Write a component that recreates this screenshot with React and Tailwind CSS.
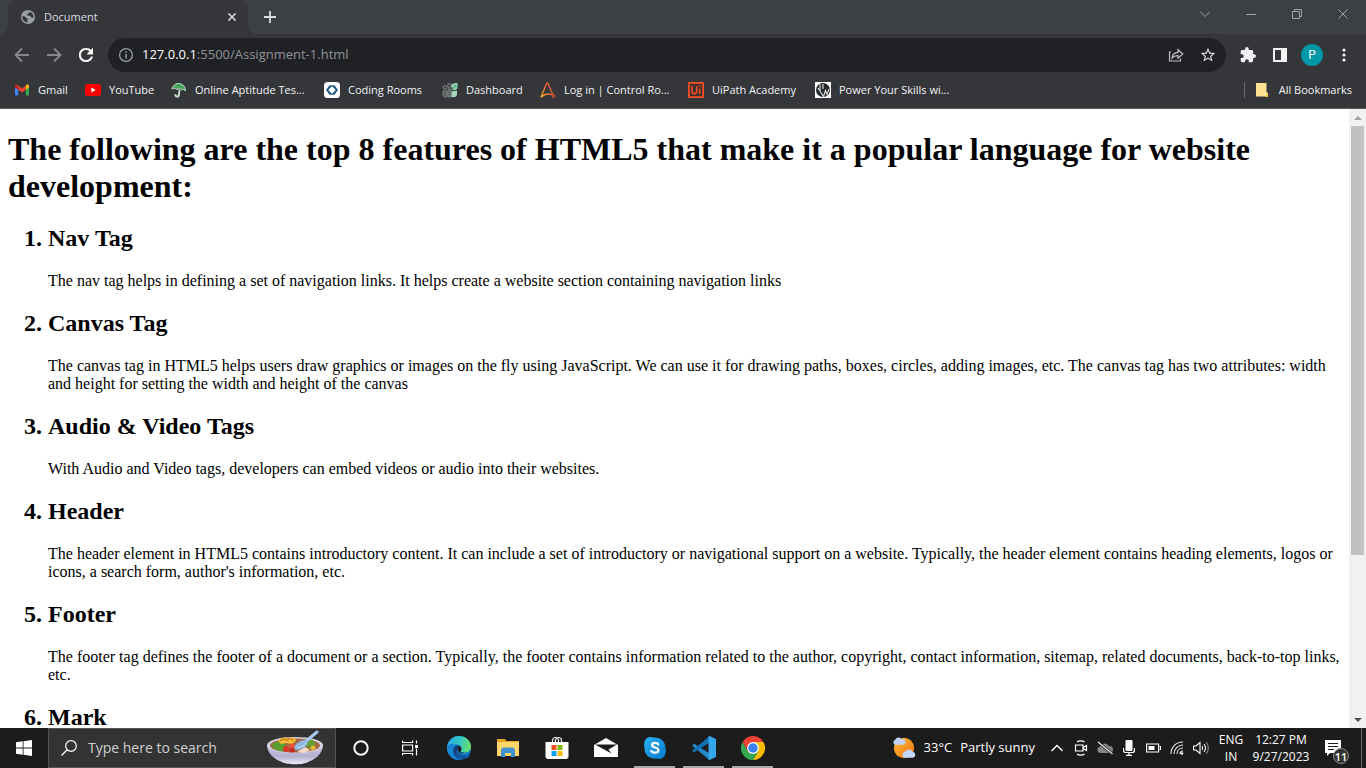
import React from 'react';

const ui = "font-['Open_Sans','Noto_Sans',sans-serif]";

/* ---------- browser icons ---------- */

function Globe() {
  return (
    <svg viewBox="0 0 14 14" className="size-3.5 shrink-0" aria-hidden="true">
      <circle cx="7" cy="7" r="7" fill="#9aa0a6" />
      <path d="M1.3 6.2c1.6-.2 3 .2 3.600 1.300.5.9 1.700.5 1.800 1.600.1 1-.4 1.800-.4 3.300C3.500 12.200 1 9.500 1.300 6.200zM6 1.500h3.200c.2 1-.9 1.400-1.600 1.600C6.600 3.400 7.300 4.300 6.300 4.700c-.6.3.2 1.100 1 1 1.200-.2 2.400.3 2.700 1.300.2.900 1.200.8 2.500.5C12.600 4.500 10.600 1.600 7.500 1.200z" fill="#35363a" />
    </svg>
  );
}

function Cross({ className }) {
  return (
    <svg viewBox="0 0 12 12" className={className} aria-hidden="true">
      <path d="M.5.5l11 11M11.500.500l-11 11" stroke="currentColor" fill="none" vectorEffect="non-scaling-stroke" />
    </svg>
  );
}

function Arrow({ flip }) {
  return (
    <svg viewBox="0 0 16 16" className={flip ? 'size-4 rotate-180' : 'size-4'} aria-hidden="true">
      <path d="M15 8H2M8 1.500L1.500 8 8 14.500" fill="none" stroke="#85878b" strokeWidth="1.900" />
    </svg>
  );
}

function Reload() {
  return (
    <svg viewBox="4 4 16 16" className="size-3.5" aria-hidden="true">
      <path fill="#fff" stroke="#fff" strokeWidth=".4" d="M17.650 6.350C16.200 4.900 14.210 4 12 4c-4.420 0-7.990 3.580-7.990 8s3.570 8 7.990 8c3.730 0 6.840-2.550 7.730-6h-2.080c-.820 2.330-3.040 4-5.650 4-3.310 0-6-2.690-6-6s2.690-6 6-6c1.660 0 3.140.690 4.220 1.780L13 11h7V4l-2.350 2.350z" />
    </svg>
  );
}

function Info() {
  return (
    <svg viewBox="0 0 16 16" className="size-4 shrink-0" aria-hidden="true">
      <circle cx="8" cy="8" r="6.400" fill="none" stroke="#9aa0a6" strokeWidth="1.300" />
      <path d="M8 7v4.500M8 4.200v1.600" stroke="#9aa0a6" strokeWidth="1.500" />
    </svg>
  );
}

function Share() {
  return (
    <svg viewBox="0 0 16 16" className="size-4" aria-hidden="true">
      <path d="M3 5H1.500v9h11v-2.500M4 11c.4-3.500 2.400-5.400 6-5.600V2.700L14.800 7 10 11.200V8.600C7.500 8.500 5.500 9.300 4 11z" fill="none" stroke="#bdc1c6" strokeWidth="1.200" />
    </svg>
  );
}

function Star() {
  return (
    <svg viewBox="1 1 22 22" className="size-4" aria-hidden="true">
      <path fill="#dadce0" d="M22 9.240l-7.190-.620L12 2 9.190 8.630 2 9.240l5.460 4.730L5.820 21 12 17.270 18.180 21l-1.630-7.030L22 9.240zM12 15.400l-3.760 2.270 1-4.280-3.320-2.880 4.380-.380L12 6.100l1.710 4.040 4.380.380-3.320 2.880 1 4.280L12 15.400z" />
    </svg>
  );
}

function Puzzle() {
  return (
    <svg viewBox="1 1 22 22" className="size-4" aria-hidden="true">
      <path fill="#f1f3f4" d="M20.500 11H19V7c0-1.100-.9-2-2-2h-4V3.500a2.500 2.500 0 0 0-5 0V5H4c-1.100 0-2 .9-2 2v3.800h1.500a2.700 2.700 0 0 1 0 5.400H2V20c0 1.100.9 2 2 2h3.800v-1.500a2.700 2.700 0 0 1 5.400 0V22H17c1.100 0 2-.9 2-2v-4h1.500a2.500 2.500 0 0 0 0-5z" />
    </svg>
  );
}

function SidePanel() {
  return (
    <svg viewBox="0 0 14 14" className="size-3.5" aria-hidden="true">
      <path fill="#f1f3f4" fillRule="evenodd" d="M0 0h14v14H0zM2 2v10h6V2z" />
    </svg>
  );
}

/* ---------- bookmark icons ---------- */

const marks = {
  gmail: (
    <svg viewBox="0 0 16 16" className="size-4 shrink-0">
      <path d="M1 4.500v8.200c0 .5.3.8.8.8h2.400V7z" fill="#4285f4" />
      <path d="M15 4.500v8.200c0 .5-.3.8-.8.8h-2.400V7z" fill="#34a853" />
      <path d="M4.200 3.600v4.200L8 10.600l3.800-2.800V3.600L8 6.500z" fill="#ea4335" />
      <path d="M11.800 3.400v4.400L15 5.400V4.200c0-1.500-1.500-2-2.500-1.300z" fill="#fbbc04" />
      <path d="M4.200 3.400v4.400L1 5.400V4.200c0-1.500 1.500-2 2.500-1.300z" fill="#c5221f" />
    </svg>
  ),
  youtube: (
    <svg viewBox="0 0 16 16" className="size-4 shrink-0">
      <rect x="0" y="2" width="16" height="12" rx="3" fill="#f00" />
      <path d="M6.300 5.500v5L10.700 8z" fill="#fff" />
    </svg>
  ),
  umbrella: (
    <svg viewBox="0 0 16 16" className="size-4 shrink-0">
      <path d="M1 7C1.500 3.500 5 .9 8.500 1.600c3.600.6 6 3.400 6 7.400-1.300-1.700-2.700-1.900-3.800-1C9.500 6.400 7.500 6 6 7.500 4.500 6 2.500 6 1 7z" fill="#45a65a" stroke="#d5ead8" strokeWidth=".9" />
      <path d="M8.500 7.500L8 12.500c-.4 3-4 2.600-3.600-.3" fill="none" stroke="#c5dfc8" strokeWidth="1.900" />
    </svg>
  ),
  coding: (
    <svg viewBox="0 0 16 16" className="size-4 shrink-0">
      <rect width="16" height="16" rx="3.500" fill="#fff" />
      <path d="M5.500 3.200h5L14 8l-3.500 4.800h-5L2 8z" fill="#235880" />
      <path d="M8 4.300L11.700 8 8 11.700 4.300 8z" fill="#fff" />
    </svg>
  ),
  dashboard: (
    <svg viewBox="0 0 16 16" className="size-4 shrink-0">
      <circle cx="3" cy="5.500" r="1.800" fill="none" stroke="#8c9290" />
      <circle cx="7.500" cy="3.500" r="1.800" fill="none" stroke="#8c9290" />
      <path d="M1 9h4v6H2.500C1 15 .6 12 1 9zM6 7h3v8H6z" fill="#59605e" stroke="#8c9290" strokeWidth=".8" />
      <path d="M9 3.500C10 1.500 12 1 15.500 1v5c-1 2-3 2.500-5 2z" fill="#8fcfaf" />
      <path d="M9.500 9.500l5.500-1v4c0 2-2 3-5.500 2.500z" fill="#a7d8bd" />
      <path d="M10 8l4-5" stroke="#3f8b65" />
    </svg>
  ),
  control: (
    <svg viewBox="0 0 16 16" className="size-4 shrink-0">
      <defs>
        <linearGradient id="controlGrad" x1="0" y1="1" x2="1" y2="0">
          <stop offset="0" stopColor="#f7b32b" />
          <stop offset=".6" stopColor="#e25c35" />
        </linearGradient>
      </defs>
      <path d="M1 15.300L6.700 1.200h1.200l5 11.500M1 15.300c3.500-3.300 6.500-4.300 11-2.500" fill="none" stroke="url(#controlGrad)" strokeWidth="1.400" />
      <circle cx="13.500" cy="14" r="1.400" fill="none" stroke="#dc5038" strokeWidth="1.100" />
    </svg>
  ),
  uipath: (
    <svg viewBox="0 0 16 16" className="size-4 shrink-0">
      <rect x=".9" y=".9" width="14.200" height="14.200" fill="#40302e" stroke="#f04e23" strokeWidth="1.800" />
      <path d="M4 4v5.200c0 3.200 4.700 3.200 4.700 0V4M11.600 6.500V12M11.600 3.600v1.500" fill="none" stroke="#f04e23" strokeWidth="1.600" />
    </svg>
  ),
  power: (
    <svg viewBox="0 0 16 16" className="size-4 shrink-0">
      <rect width="16" height="16" fill="#fff" />
      <circle cx="8" cy="8" r="7" fill="#24282a" />
      <path d="M5 2v7.500M8 2v5M3 6l5.500 8.500 2-6 1.500 4L14 7" fill="none" stroke="#dfe1e2" strokeWidth="1.100" />
    </svg>
  ),
};

const bookmarks = [
  ['gmail', 'Gmail', 'w-[71px]'],
  ['youtube', 'YouTube', 'w-[86px]'],
  ['umbrella', 'Online Aptitude Tes...', 'w-[153px]'],
  ['coding', 'Coding Rooms', 'w-[118px]'],
  ['dashboard', 'Dashboard', 'w-[98px]'],
  ['control', 'Log in | Control Ro...', 'w-[148px]'],
  ['uipath', 'UiPath Academy', 'w-[127px]'],
  ['power', 'Power Your Skills wi...', 'w-[150px]'],
];

function TabStrip() {
  return (
    <header className="flex h-[34px] shrink-0 items-end bg-[#3c4043] pl-2">
      <div className="relative flex h-full w-60 items-center rounded-t-lg bg-[#35363a] pr-2.5 pl-[13px] text-[#dadce0]">
        <svg viewBox="0 0 8 8" className="absolute bottom-0 -left-2 size-2" aria-hidden="true"><path d="M8 0v8H0a8 8 0 0 0 8-8z" fill="#35363a" /></svg>
        <svg viewBox="0 0 8 8" className="absolute -right-2 bottom-0 size-2" aria-hidden="true"><path d="M0 0v8h8a8 8 0 0 1-8-8z" fill="#35363a" /></svg>
        <Globe />
        <span className="flex-1 pl-[9px] text-[11px]">Document</span>
        <button type="button" aria-label="Close tab" className="grid size-3 place-items-center"><Cross className="size-2 stroke-[1.5]" /></button>
      </div>
      <button type="button" aria-label="New tab" className="ml-3.5 grid h-full w-4 place-items-center text-[#dadce0]">
        <svg viewBox="0 0 12 12" className="size-3"><path d="M6 0v12M0 6h12" stroke="currentColor" strokeWidth="1.800" /></svg>
      </button>
      <div className="ml-auto flex h-7 items-center self-start text-[#a0a3a6]">
        <button type="button" aria-label="Search tabs" className="grid w-[46px] place-items-center">
          <svg viewBox="0 0 10 6" className="h-1.5 w-2.5"><path d="M0 .5l5 5 5-5" fill="none" stroke="currentColor" /></svg>
        </button>
        <button type="button" aria-label="Minimize" className="grid h-3 w-[46px] place-items-center"><span className="h-px w-2.5 bg-[#a0a3a6]" /></button>
        <button type="button" aria-label="Restore" className="grid w-[46px] place-items-center">
          <svg viewBox="0 0 10 10" className="size-2.5"><path d="M.5 2.500h7v7h-7zM2.500 2.500v-2h7v7h-2" fill="none" stroke="currentColor" /></svg>
        </button>
        <button type="button" aria-label="Close" className="grid w-[46px] place-items-center"><Cross className="size-2.5" /></button>
      </div>
    </header>
  );
}

function Toolbar() {
  return (
    <div className="flex h-[42px] shrink-0 items-center bg-[#35363a] pl-1.5">
      <button type="button" aria-label="Back" className="grid w-8 place-items-center"><Arrow /></button>
      <button type="button" aria-label="Forward" className="grid w-8 place-items-center"><Arrow flip /></button>
      <button type="button" aria-label="Reload" className="grid w-8 place-items-center"><Reload /></button>
      <div className="ml-1.5 flex h-[34px] min-w-0 flex-1 items-center rounded-full bg-[#202124] pr-2.5 pl-2.5">
        <Info />
        <button type="button" aria-label="Address" className="flex-1 pl-2 text-left text-[13px] text-[#8f9398]"><span className="text-white">127.0.0.1</span>:5500/Assignment-1.html</button>
        <button type="button" aria-label="Share" className="mr-4"><Share /></button>
        <button type="button" aria-label="Bookmark"><Star /></button>
      </div>
      <div className="flex w-[140px] items-center pl-1.5">
        <button type="button" aria-label="Extensions" className="grid w-8 place-items-center"><Puzzle /></button>
        <button type="button" aria-label="Side panel" className="grid w-8 place-items-center"><SidePanel /></button>
        <button type="button" aria-label="Profile" className="mx-[5px] size-[22px] rounded-full bg-[#0097a7] font-[Roboto,sans-serif] text-xs text-white">P</button>
        <button type="button" aria-label="Menu" className="grid w-8 place-items-center">
          <svg viewBox="0 0 4 14" className="h-3.5 w-1" fill="#f1f3f4"><circle cx="2" cy="2" r="1.600" /><circle cx="2" cy="7" r="1.600" /><circle cx="2" cy="12" r="1.600" /></svg>
        </button>
      </div>
    </div>
  );
}

function Bookmarks() {
  return (
    <nav className="flex h-[33px] shrink-0 items-center border-b border-[#5d5a5b] bg-[#35363a] pr-3.5 pb-1 pl-3.5 text-[11px] text-[#f1f3f4]">
      {bookmarks.map(([icon, label, width]) => (
        <a key={icon} href="#" className={`flex shrink-0 items-center gap-2 whitespace-nowrap ${width}`}>
          {marks[icon]}
          <span>{label}</span>
        </a>
      ))}
      <button type="button" className="ml-auto flex items-center gap-2.5 border-l border-[#696b6f] pl-2.5 whitespace-nowrap">
        <svg viewBox="0 0 14 16" className="h-4 w-3.5"><path d="M1 1h10.500v9.500H13V14.500H1z" fill="#fde293" /><path d="M10 15l3-4v4z" fill="#f5c945" /></svg>
        All Bookmarks
      </button>
    </nav>
  );
}

/* ---------- document ---------- */

const features = [
  ['Nav Tag', 'The nav tag helps in defining a set of navigation links. It helps create a website section containing navigation links'],
  ['Canvas Tag', 'The canvas tag in HTML5 helps users draw graphics or images on the fly using JavaScript. We can use it for drawing paths, boxes, circles, adding images, etc. The canvas tag has two attributes: width and height for setting the width and height of the canvas'],
  ['Audio & Video Tags', 'With Audio and Video tags, developers can embed videos or audio into their websites.'],
  ['Header', "The header element in HTML5 contains introductory content. It can include a set of introductory or navigational support on a website. Typically, the header element contains heading elements, logos or icons, a search form, author's information, etc."],
  ['Footer', 'The footer tag defines the footer of a document or a section. Typically, the footer contains information related to the author, copyright, contact information, sitemap, related documents, back-to-top links, etc.'],
  ['Mark', ''],
];

function Document() {
  return (
    <div className="flex min-h-0 flex-1 bg-white">
      <main className="min-w-0 flex-1 overflow-hidden px-2 pt-[22px] font-['Liberation_Serif',serif] text-black">
        <h1 className="text-[32px] leading-[37px] font-bold">The following are the top 8 features of HTML5 that make it a popular language for website development:</h1>
        <ol className="mt-5 flex list-decimal flex-col gap-5 pl-10">
          {features.map(([title, text]) => (
            <li key={title} className="text-2xl leading-[27px] font-bold">
              <h2>{title}</h2>
              {text && <p className="mt-5 text-base leading-[18px] font-normal">{text}</p>}
            </li>
          ))}
        </ol>
      </main>
      <div className="flex w-[17px] shrink-0 flex-col bg-[#f1f1f1]">
        <button type="button" aria-label="Scroll up" className="grid h-[17px] place-items-center"><svg viewBox="0 0 8 4" className="h-1 w-2"><path d="M0 4l4-4 4 4z" fill="#a3a3a3" /></svg></button>
        <div className="flex-1 px-0.5"><div className="h-[73.3%] bg-[#c1c1c1]" /></div>
        <button type="button" aria-label="Scroll down" className="grid h-[17px] place-items-center"><svg viewBox="0 0 8 4" className="h-1 w-2"><path d="M0 0l4 4 4-4z" fill="#505050" /></svg></button>
      </div>
    </div>
  );
}

/* ---------- taskbar ---------- */

function Bowl() {
  return (
    <svg viewBox="0 0 56 36" className="h-9 w-14 shrink-0" aria-hidden="true">
      <defs>
        <linearGradient id="bowlGrad" x1="0" y1="0" x2="0" y2="1"><stop offset="0" stopColor="#cdcbe3" /><stop offset=".6" stopColor="#b3b0d2" /><stop offset="1" stopColor="#efeef8" /></linearGradient>
      </defs>
      <path d="M0 15c0 8 7 14 15 17 5 3 21 3 26 0 8-3 15-9 15-17z" fill="url(#bowlGrad)" />
      <ellipse cx="28" cy="15" rx="28" ry="8" fill="#d5d3e8" />
      <ellipse cx="28" cy="15.500" rx="25" ry="7" fill="#a4663e" />
      <path d="M5 16c1-4 6-5 9-3 4-1 4 4 8 4l-2 4C13 22 7 20 5 16z" fill="#59a02f" />
      <path d="M11 11c2-4 7-4 10-3 4-2 8 0 8 3l-4 3-6-1-5 1z" fill="#f5bd36" />
      <path d="M13 11c3-3 6-2 7 0M20 10c2-2 6-1 6 1" fill="none" stroke="#c97b20" strokeWidth="1.200" />
      <path d="M38 11c5-3 10-1 11 3l-5 4c-4 0-7-2-6-7z" fill="#689c35" />
      <circle cx="46" cy="18" r="2.500" fill="#e3b73a" />
      <circle cx="19" cy="19" r="3" fill="#d8362d" /><circle cx="25" cy="16.500" r="3" fill="#ed5140" /><circle cx="25" cy="20" r="2.500" fill="#c52a25" />
      <path d="M30 22l8-5 5 3-6 3z" fill="#f5ddc6" />
      <path d="M38 12L50 2" stroke="#a9caef" strokeWidth="3" strokeLinecap="round" />
      <ellipse cx="34" cy="15" rx="7.500" ry="3.800" transform="rotate(-30 34 15)" fill="#8fb5e2" />
      <path d="M30 17c3 1 7-1 9-4" fill="none" stroke="#d7e7f8" />
    </svg>
  );
}

const apps = [
  ['Cortana', false, (
    <svg viewBox="0 0 16 16" className="size-4"><circle cx="8" cy="8" r="6.700" fill="none" stroke="#f5f5f5" strokeWidth="2" /></svg>
  )],
  ['Task View', false, (
    <svg viewBox="0 0 16 16" className="size-4" fill="none" stroke="#fff" strokeWidth="1.200"><path d="M.6.500v2h10v-2M.6 5h10v6H.6zM.6 15.500v-2h10v2M14.500.500v3M14.500 8.500v7" /><path d="M13 5h3v3h-3z" fill="#fff" stroke="none" /></svg>
  )],
  ['Microsoft Edge', false, (
    <svg viewBox="0 0 24 24" className="size-6">
      <defs>
        <linearGradient id="edgeTop" x1="0" y1=".3" x2="1" y2=".5"><stop offset="0" stopColor="#2aa9e0" /><stop offset=".5" stopColor="#31c5c6" /><stop offset="1" stopColor="#66df68" /></linearGradient>
        <linearGradient id="edgeBody" x1="0" y1="0" x2="0" y2="1"><stop offset="0" stopColor="#1da0dd" /><stop offset="1" stopColor="#1470c6" /></linearGradient>
      </defs>
      <circle cx="12" cy="12" r="12" fill="url(#edgeBody)" />
      <path d="M.1 11C1 4.500 6 0 12 0c7 0 12 5 12 10.500 0 4-3 6.200-6.500 6.200-3.200 0-4.400-1.100-3.500-2.300 1.500-2.300.2-5.600-4-5.700C6 6.500 2 7.500.1 11z" fill="url(#edgeTop)" />
      <path d="M10 8.700c-4.300 2-5.200 7.800-1.400 11.500 2.500 2.500 6.200 3.200 9.600 2.300 1.700-.9 3.200-2.300 4.100-3.800-5 2.300-11.500 0-11.500-5.400 0-1.500.7-2.500 1.700-3.200-.6-.8-1.500-1.300-2.500-1.400z" fill="#153e80" />
      <path d="M8.600 8.900C4.500 10 4 17.500 9.500 22.500c1 .8 2 1.300 3.600 1.400C5 24 0 18.500.1 11 1.500 7.900 5.500 7 8.600 8.900z" fill="#1785d3" />
      <path d="M10.800 13.300c0 5.400 6.500 7.700 11.500 5.400.8-.2.9.3.6.7-1.200 1.800-3 3.200-4.700 3.100h-5.500c-4-2.500-4.500-7.500-1.900-9.200z" fill="#17599e" />
      <path d="M12.500 10.100c2 1 2.400 3 1.500 4.300-1 1.200.3 2.300 3.500 2.300h.5c-2 .9-7.200-.2-7.200-3.400 0-1.500.7-2.500 1.700-3.200z" fill="#1c1c1c" />
    </svg>
  )],
  ['File Explorer', false, (
    <svg viewBox="0 0 22 20" className="h-5 w-[22px]">
      <path d="M0 1h8l1.500 2H22v15H0z" fill="#e6a61a" /><path d="M0 4h22v14H0z" fill="#ffd76b" />
      <path d="M4 19v-7.500L6 9.500h10l2 2V19h-4v-4H8v4z" fill="#3f91d0" />
    </svg>
  )],
  ['Microsoft Store', false, (
    <svg viewBox="0 0 24 24" className="size-6">
      <path d="M7.500 7V4.500a3 3 0 0 1 6 0V7M10.500 7V4.500a3 3 0 0 1 6 0V7" fill="none" stroke="#eee" strokeWidth="1.200" />
      <path d="M.5 6h23v14.500c0 1.600-1 2.500-2.500 2.500H3C1.500 23 .5 22 .5 20.500z" fill="#fff" />
      <path d="M6.500 9h5v5h-5z" fill="#f25022" /><path d="M12.500 9h5v5h-5z" fill="#7fba00" /><path d="M6.500 15h5v5h-5z" fill="#00a4ef" /><path d="M12.500 15h5v5h-5z" fill="#ffb900" />
    </svg>
  )],
  ['Mail', false, (
    <svg viewBox="0 0 24 20" className="h-5 w-6"><path d="M0 7L12 0l12 7v12H0z" fill="#fff" /><path d="M1 6.500h22l-8.500 5 3 4L1 6.500z" fill="#1c1c1c" /></svg>
  )],
  ['Skype', true, (
    <svg viewBox="0 0 22 22" className="size-[22px]">
      <defs><linearGradient id="skypeGrad" x1="0" y1="0" x2="1" y2="1"><stop offset="0" stopColor="#2bb4ef" /><stop offset="1" stopColor="#0679cf" /></linearGradient></defs>
      <path d="M6 0c2 0 3 .6 4 .6C17 .2 22 5 21.500 12c.8 1.400.5 4-.5 6-1.500 3.500-5 5-8.500 3.500C5 22 0 17 .5 10.500-.8 5 1.500.5 6 0z" fill="url(#skypeGrad)" />
      <path d="M14.300 7.500C13.400 5.500 8.300 5.200 8 7.900c0 3.200 6.400 2 6.400 5.300 0 3-5.700 3.300-7.100.8" fill="none" stroke="#fff" strokeWidth="2.200" strokeLinecap="round" />
    </svg>
  )],
  ['Visual Studio Code', true, (
    <svg viewBox="0 0 24 24" className="size-6">
      <path d="M17.500 24L0 9.500l2.300-1.800L17.500 17.500z" fill="#2489ca" />
      <path d="M0 14.500L17.500.2v6.300L2.300 16.200z" fill="#1070b3" />
      <path d="M17.500 0L24 3v18l-6.500 3c-.7 0-1-.5-1-1V1c0-.5.3-1 1-1z" fill="#35a5ec" />
    </svg>
  )],
  ['Google Chrome', true, (
    <svg viewBox="0 0 24 24" className="size-6">
      <path d="M12 12V6h10.400A12 12 0 0 1 12 24l5.200-9z" fill="#fbbc04" />
      <path d="M12 12l5.200 3L12 24A12 12 0 0 1 1.600 6l5.200 9z" fill="#34a853" />
      <path d="M1.600 6L6.800 15 12 6h10.400A12 12 0 0 0 1.600 6z" fill="#ea4335" />
      <circle cx="12" cy="12" r="5.900" fill="#fff" /><circle cx="12" cy="12" r="4.700" fill="#3c80ee" />
    </svg>
  )],
];

const tray = [
  ['Show hidden icons', <svg viewBox="0 0 12 8" className="h-2 w-3"><path d="M.5 7L6 1.500 11.500 7" fill="none" stroke="#fff" strokeWidth="1.300" /></svg>],
  ['Meet Now', <svg viewBox="0 0 14 16" className="h-4 w-3.5" fill="none" stroke="#fff" strokeWidth="1.200"><path d="M1.500 5h7.500v6H1.500zM9 7.500l3.500-2v5l-3.500-2M3 2c2-1.500 5.500-1.500 7.500 0M3 14c2 1.500 5.500 1.500 7.500 0" /></svg>],
  ['OneDrive', <svg viewBox="0 0 16 14" className="h-3.5 w-4"><path d="M3.500 12a3.300 3.300 0 0 1-.5-6.500A5 5 0 0 1 12 5a3.500 3.500 0 0 1 .8 7z" fill="#858585" /><path d="M1.500 1.500l14 11.500" stroke="#1c1c1c" strokeWidth="2.600" /><path d="M1 1l14.500 12" stroke="#eee" strokeWidth="1.200" /></svg>],
  ['Microphone', <svg viewBox="0 0 12 16" className="h-4 w-3"><rect x="2.500" width="7" height="11" rx="1" fill="#fff" /><path d="M.6 8v2.500q0 2 2 2h6.800q2 0 2-2V8M6 12.500V15M3 15.300h6" fill="none" stroke="#fff" strokeWidth="1.200" /></svg>],
  ['Battery', <svg viewBox="0 0 15 10" className="h-2.5 w-[15px]"><path d="M.6 1h12v8H.6zM13.500 3.500h1v3h-1" fill="none" stroke="#fff" strokeWidth="1.100" /><path d="M2.500 3h6v4h-6z" fill="#fff" /></svg>],
  ['Wi-Fi', <svg viewBox="0 0 14 14" className="size-3.5" fill="none" stroke="#eee" strokeWidth="1.100"><path d="M1 13C1 6 6 1 13 1M4 13c0-5 4-9 9-9M7 13c0-3.500 2.500-6 6-6M10 13c0-1.800 1-3 3-3" /><circle cx="12" cy="12.500" r="1.200" fill="#fff" stroke="none" /></svg>],
  ['Volume', <svg viewBox="0 0 16 14" className="h-3.5 w-4" fill="none" stroke="#fff" strokeWidth="1.100"><path d="M.6 5H3l4-3.500v11L3 9H.6zM9 5q1.500 2 0 4M11 3q3 4 0 8" /><path d="M13.300 1q4 6 0 12" stroke="#888" /></svg>],
];

function Taskbar() {
  return (
    <footer className="flex h-10 shrink-0 bg-[#1c1c1c] text-white">
      <button type="button" aria-label="Start" className="grid w-12 shrink-0 place-items-center">
        <svg viewBox="0 0 16 16" className="size-4" fill="#fff"><path d="M0 2.200l6.700-.9v6.200H0zM7.500 1.200L16 0v7.500H7.500zM0 8.500h6.700v6.200L0 13.800zM7.500 8.500H16V16l-8.500-1.200z" /></svg>
      </button>
      <label className="flex w-72 shrink-0 items-center border border-[#555] bg-[#333] pl-3">
        <svg viewBox="0 0 16 16" className="size-4 shrink-0"><circle cx="10" cy="6" r="5.300" fill="none" stroke="#fff" strokeWidth="1.200" /><path d="M6.200 9.800L.5 15.500" stroke="#fff" strokeWidth="1.300" /></svg>
        <input type="text" aria-label="Type here to search" placeholder="Type here to search" className="min-w-0 flex-1 bg-transparent pl-[11px] text-sm text-white outline-none placeholder:text-[#d0d0d0]" />
        <Bowl />
        <span className="w-3" />
      </label>
      <div className="flex">
        {apps.map(([name, open, icon]) => (
          <button key={name} type="button" aria-label={name} className="relative grid w-[49px] shrink-0 place-items-center">
            {icon}
            {open && <span className="absolute inset-x-1 bottom-0 h-0.5 bg-[#aaa]" />}
          </button>
        ))}
      </div>
      <button type="button" className="ml-auto flex shrink-0 items-center gap-2 pr-2.5 text-[13px] whitespace-nowrap">
        <svg viewBox="0 0 26 24" className="h-6 w-6">
          <defs><linearGradient id="sunGrad" x1="0" y1="0" x2="1" y2="1"><stop offset="0" stopColor="#ffba36" /><stop offset="1" stopColor="#ef7614" /></linearGradient></defs>
          <circle cx="13" cy="12" r="11" fill="url(#sunGrad)" />
          <path d="M3 8.500a3 3 0 0 1 .5-5.500 4 4 0 0 1 7-.5 3 3 0 0 1 2 6z" fill="#bfd2f2" />
          <path d="M14 22.500a3.300 3.300 0 0 1 0-6.500 5 5 0 0 1 8.500 0 3.300 3.300 0 0 1 0 6.500z" fill="#c5d7f6" />
        </svg>
        <span>33°C</span>
        <span>Partly sunny</span>
      </button>
      <div className="flex shrink-0">
        {tray.map(([name, icon]) => (
          <button key={name} type="button" aria-label={name} className="grid w-6 place-items-center">{icon}</button>
        ))}
      </div>
      <button type="button" className="w-9 shrink-0 text-center text-xs leading-[17px]">ENG<br />IN</button>
      <button type="button" className="w-16 shrink-0 text-center text-xs leading-[17px] whitespace-nowrap"><time dateTime="2023-09-27T12:27">12:27 PM<br />9/27/2023</time></button>
      <button type="button" aria-label="Notifications" className="relative flex w-12 shrink-0 items-center pl-3">
        <svg viewBox="0 0 16 16" className="size-4"><path d="M0 0h16v13H5l-3 3v-3H0z" fill="#fff" /><path d="M3 3.500h10M3 6.500h10M3 9.500h6" stroke="#1c1c1c" strokeWidth="1.100" /></svg>
        <span className="absolute right-3 bottom-1 grid size-4 place-items-center rounded-full border border-[#888] bg-[#333] text-[11px] leading-none font-semibold">11</span>
      </button>
      <div className="mr-1 w-px shrink-0 bg-[#666]" />
    </footer>
  );
}

export default function App() {
  return (
    <div className={`flex h-screen flex-col overflow-hidden ${ui}`}>
      <TabStrip />
      <Toolbar />
      <Bookmarks />
      <Document />
      <Taskbar />
    </div>
  );
}
